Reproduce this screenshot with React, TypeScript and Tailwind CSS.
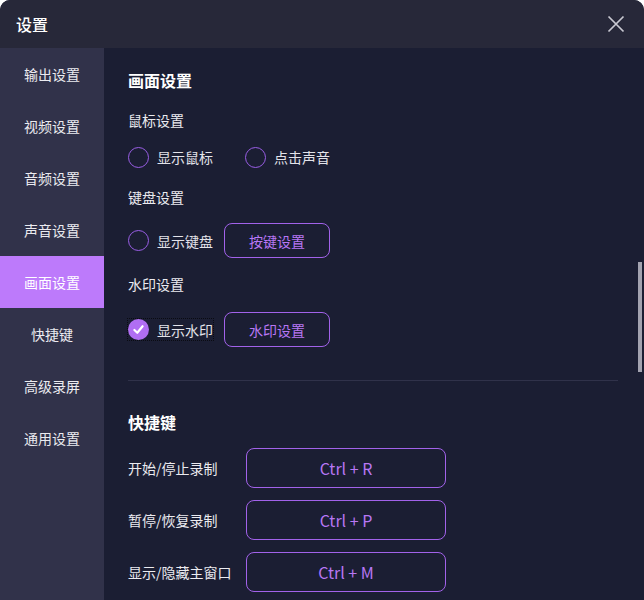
import { useState } from "react";

const NAV = ["输出设置", "视频设置", "音频设置", "声音设置", "画面设置", "快捷键", "高级录屏", "通用设置"];

const HOTKEYS = [
  { label: "开始/停止录制", key: "Ctrl + R" },
  { label: "暂停/恢复录制", key: "Ctrl + P" },
  { label: "显示/隐藏主窗口", key: "Ctrl + M" },
];

function Radio({ checked, label, focused }: { checked?: boolean; label: string; focused?: boolean }) {
  return (
    <label
      className={`flex items-center gap-2 cursor-pointer ${
        focused ? "outline outline-1 outline-dotted outline-[#0a0b12]" : ""
      }`}
    >
      <span
        className={`w-[21px] h-[21px] rounded-full flex items-center justify-center shrink-0 ${
          checked ? "bg-[#b06ef2]" : "border-[1.5px] border-[#9a5ee6]"
        }`}
      >
        {checked && (
          <svg width="13" height="13" viewBox="0 0 12 12" fill="none">
            <path d="M2.2 6.4L4.9 9L9.8 3" stroke="white" strokeWidth="2" strokeLinecap="round" strokeLinejoin="round" />
          </svg>
        )}
      </span>
      <span className="text-sm text-[#e3e3ea]">{label}</span>
    </label>
  );
}

export default function App() {
  const [active, setActive] = useState(4);

  return (
    <div
      className="w-[644px] h-[600px] overflow-hidden rounded-t-[10px] flex flex-col bg-[#1b1e33] text-white"
      style={{ fontFamily: '"Noto Sans CJK SC", "Liberation Sans", sans-serif' }}
    >
      {/* Header */}
      <div className="h-12 shrink-0 bg-[#272839] flex items-center justify-between pl-4 pr-[19px]">
        <h1 className="text-base font-medium text-white">设置</h1>
        <button className="text-[#c9c9d2]">
          <svg width="18" height="18" viewBox="0 0 18 18" fill="none">
            <path d="M1.5 1.5L16.5 16.5M16.5 1.5L1.5 16.5" stroke="currentColor" strokeWidth="1.7" />
          </svg>
        </button>
      </div>

      <div className="flex flex-1 min-h-0">
        {/* Sidebar */}
        <div className="w-[104px] shrink-0 bg-[#31324a]">
          {NAV.map((n, i) => (
            <button
              key={n}
              onClick={() => setActive(i)}
              className={`w-full h-[52px] flex items-center justify-center text-sm ${
                i === active ? "bg-[#bd7afb] text-white" : "text-[#ebebf0]"
              }`}
            >
              {n}
            </button>
          ))}
        </div>

        {/* Content */}
        <div className="flex-1 flex min-w-0">
          <div className="flex-1 pl-6 pr-5 pt-[22px]">
            <h2 className="text-base font-bold leading-5">画面设置</h2>

            <p className="text-sm mt-[20px] leading-5 text-[#ebebf0]">鼠标设置</p>
            <div className="flex items-center gap-8 mt-[15px] h-6">
              <Radio label="显示鼠标" />
              <Radio label="点击声音" />
            </div>

            <p className="text-sm mt-[18px] leading-5 text-[#ebebf0]">键盘设置</p>
            <div className="flex items-center gap-[11px] mt-[16px]">
              <Radio label="显示键盘" />
              <button className="w-[106px] h-[35px] rounded-lg border border-[#a262ea] text-sm text-[#b877f5]">
                按键设置
              </button>
            </div>

            <p className="text-sm mt-[16px] leading-5 text-[#ebebf0]">水印设置</p>
            <div className="flex items-center gap-[11px] mt-[18px]">
              <Radio label="显示水印" checked focused />
              <button className="w-[106px] h-[35px] rounded-lg border border-[#a262ea] text-sm text-[#b877f5]">
                水印设置
              </button>
            </div>

            <div className="h-px bg-[#30324a] mt-[33px]" />

            <h2 className="text-base font-bold leading-5 mt-[31px]">快捷键</h2>
            <div className="flex flex-col gap-3 mt-[16px]">
              {HOTKEYS.map((h) => (
                <div key={h.label} className="flex items-center">
                  <span className="w-[118px] text-sm text-[#ebebf0] whitespace-nowrap">{h.label}</span>
                  <button className="w-[200px] h-10 rounded-lg border border-[#a262ea] text-base text-[#b877f5]">
                    {h.key}
                  </button>
                </div>
              ))}
            </div>
          </div>

          {/* Scrollbar */}
          <div className="w-[6px] shrink-0 pt-[214px] pr-[2px]">
            <div className="w-1 h-[110px] bg-[#a3a3b0]" />
          </div>
        </div>
      </div>
    </div>
  );
}
